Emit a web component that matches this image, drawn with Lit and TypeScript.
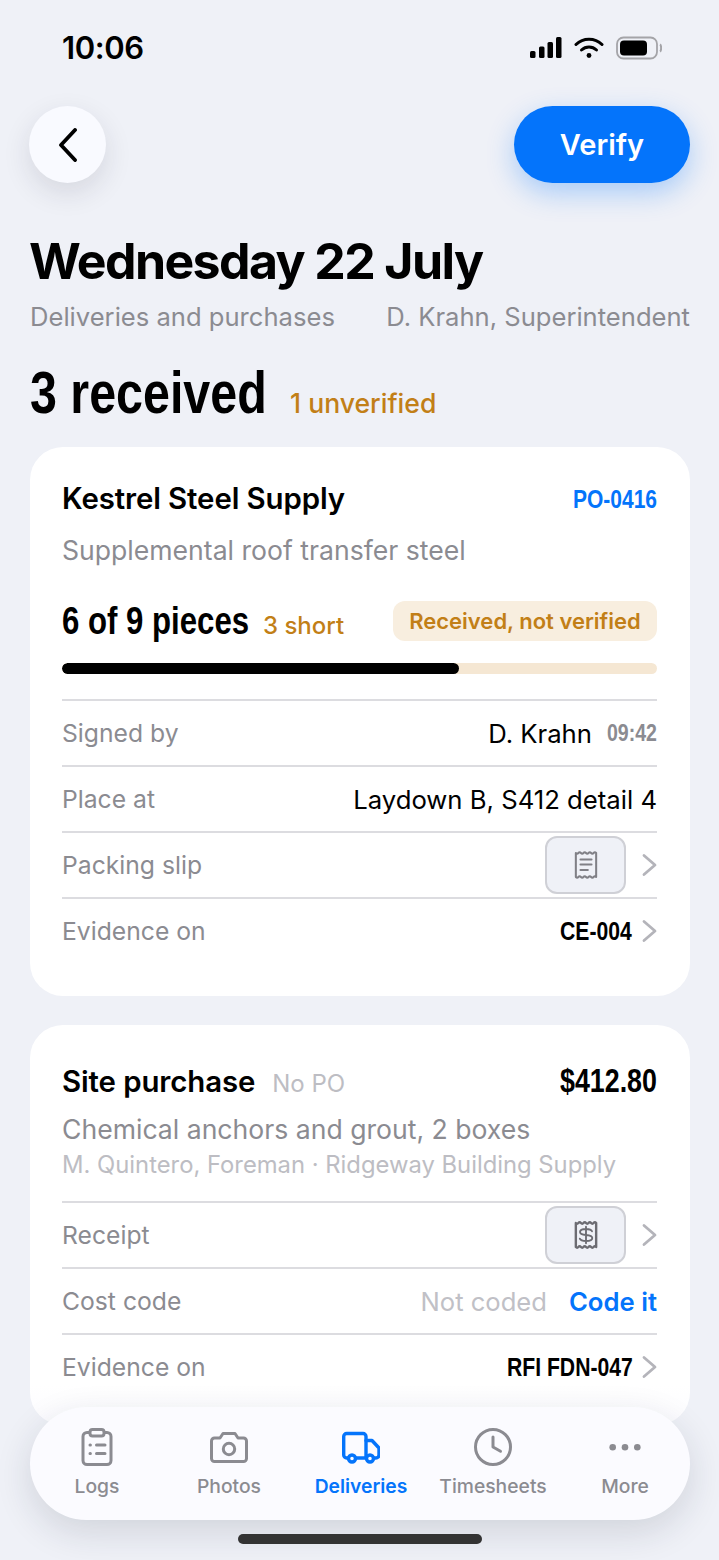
import { LitElement, html, css, svg } from "lit";
import { customElement } from "lit/decorators.js";

const chevron = html`<svg class="chev" viewBox="0 0 15 24" fill="none" stroke="currentColor" stroke-width="2.8" stroke-linecap="round" stroke-linejoin="round"><path d="M2 2.500 13 12 2 21.500"/></svg>`;

const zig = "M2 2q1.400 1.600 2.750 0t2.750 0 2.750 0 2.750 0 2.750 0 2.750 0 2.750 0 2.750 0V28q-1.400-1.600-2.750 0t-2.750 0-2.750 0-2.750 0-2.750 0-2.750 0-2.750 0-2.750 0Z";

const slipIcon = html`<svg class="slip" viewBox="0 0 26 30" fill="none" stroke="#808086" stroke-width="2.200" stroke-linejoin="round" stroke-linecap="round"><path d=${zig}/><path d="M7 9h12M7 14.500h12M7 20.500h8"/></svg>`;

const dollarIcon = html`<svg class="slip" viewBox="0 0 26 30" fill="none" stroke="#6c6c72" stroke-width="2.600" stroke-linejoin="round" stroke-linecap="round"><path d=${zig}/><path d="M19.500 11c-.6-1.700-3-2.500-6.500-2.500-3.800 0-6.500 1.200-6.500 3.300s2.700 2.900 6.500 3.200 6.800 1.100 6.800 3.200-2.900 3.300-6.800 3.300c-3.600 0-6-.8-6.700-2.600M13 6v18" stroke-width="2"/></svg>`;

const tabs = [
  { label: "Logs", icon: svg`<rect x="5" y="4.500" width="28" height="32" rx="4"/><rect x="12" y="1.500" width="14" height="6.500" rx="2.500" fill="#fbfbff"/><path d="M18.500 17h8.500M18.500 25.500h8.500"/><path d="M12 17h.4M12 25.500h.4"/>` },
  { label: "Photos", icon: svg`<path d="M4.500 33.500h29a3 3 0 0 0 3-3V13a3 3 0 0 0-3-3H28L25 5.500H13L10 10H4.500a3 3 0 0 0-3 3v17.500a3 3 0 0 0 3 3Z"/><circle cx="19" cy="21" r="5.700"/>` },
  { label: "Deliveries", active: true, sw: 3.4, icon: svg`<path d="M6.500 30H4.700a3 3 0 0 1-3-3V8.500a3 3 0 0 1 3-3H21a3 3 0 0 1 3 3V30H13.500"/><path d="M24 12.500h6l7 7.500V27a3 3 0 0 1-3 3h-2.500"/><circle cx="10" cy="30.500" r="3.500"/><circle cx="28" cy="30.500" r="3.500"/>` },
  { label: "Timesheets", icon: svg`<circle cx="19" cy="19" r="17.500"/><path d="M19 9v10l7.500 4.200"/>` },
  { label: "More", icon: svg`<circle cx="6.700" cy="19.300" r="3.300" fill="currentColor" stroke="none"/><circle cx="19" cy="19.300" r="3.300" fill="currentColor" stroke="none"/><circle cx="31.300" cy="19.300" r="3.300" fill="currentColor" stroke="none"/>` },
];

@customElement("app-root")
export class AppRoot extends LitElement {
  static styles = css`
    :host {
      display: block;
      width: 719px;
      height: 1560px;
      overflow: hidden;
      position: relative;
      background: #eff1f7;
      color: #000;
      font-family: Inter, "Liberation Sans", sans-serif;
    }
    * { box-sizing: border-box; }
    .narrow {
      display: inline-block;
      font-family: "Liberation Sans", Arial, sans-serif;
      font-weight: 700;
      white-space: nowrap;
      transform: scaleX(.82);
      transform-origin: left center;
    }
    .status { height: 106px; display: flex; justify-content: space-between; padding: 29px 57px 0 62px; }
    .time { font-size: 31px; font-weight: 600; line-height: 38px; letter-spacing: -0.4px; }
    .sysicons { display: flex; align-items: center; height: 38px; gap: 12px; margin-top: 0; }
    .sysicons svg { display: block; }
    .nav { display: flex; justify-content: space-between; padding: 0 29px; }
    .back { width: 77px; height: 77px; border-radius: 50%; background: #f9faff; display: flex; align-items: center; justify-content: center; box-shadow: 0 10px 28px rgba(30,35,60,.12); }
    .back svg { width: 22px; height: 34px; margin-left: 1px; }
    .verify { width: 176px; height: 77px; border-radius: 39px; background: #0474fb; color: #fff; font-size: 29px; font-weight: 600; display: flex; align-items: center; justify-content: center; box-shadow: 0 10px 28px rgba(4,116,251,.3); }
    h1 { margin: 49px 29px 0; font-size: 50px; line-height: 58px; font-weight: 700; letter-spacing: -1.6px; }
    .sub { margin: 10px 29px 0 30px; display: flex; justify-content: space-between; font-size: 25.600px; line-height: 34px; color: #8b8b91; }
    .summary { margin: 30px 30px 0; display: flex; align-items: baseline; gap: 23px; height: 58px; }
    .summary b { font-size: 59px; line-height: 58px; width: 237px; }
    .summary span { font-size: 26.600px; font-weight: 500; color: #c27f17; }
    .card { margin: 0 29px 29px 30px; background: #fff; border-radius: 33px; padding: 31px 33px 30px 32px; }
    .c1 { margin-top: 25px; height: 549px; }
    .c2 { height: 400px; padding-top: 36px; }
    .head { display: flex; justify-content: space-between; align-items: center; height: 40px; }
    .name { font-size: 29.400px; font-weight: 600; letter-spacing: -.1px; }
    .po { font-size: 25.600px; color: #0474fb; width: 84px; padding-top: 2px; }
    .desc { font-size: 26.600px; line-height: 34px; color: #8b8b91; margin-top: 15px; }
    .qty { display: flex; align-items: center; justify-content: space-between; margin-top: 34px; height: 40px; }
    .qty .l { display: flex; align-items: baseline; gap: 15px; }
    .qty b { font-size: 38px; width: 186px; }
    .qty .short { font-size: 24px; font-weight: 500; color: #c27f17; }
    .pill { height: 40px; width: 264px; border-radius: 12px; background: #f8eedf; color: #c27f17; font-size: 22px; font-weight: 600; display: flex; align-items: center; justify-content: center; }
    .bar { height: 11px; border-radius: 6px; background: #f5e7d3; margin-top: 22px; overflow: hidden; }
    .bar i { display: block; height: 100%; border-radius: 6px; background: #000; }
    .rows { margin-top: 25px; }
    .row { height: 66px; border-top: 2px solid #dcdce0; display: flex; align-items: center; justify-content: space-between; font-size: 24.700px; color: #8b8b91; }
    .r { display: flex; align-items: center; color: #000; font-size: 25.700px; }
    .r .t { font-size: 23.800px; color: #8b8b91; margin-left: 15px; width: 50px; }
    .ref { font-size: 25.800px; margin-right: -6px; }
    .ref.ce { width: 72px; }
    .ref.rfi { width: 125px; }
    .thumb { width: 81px; height: 58px; border-radius: 12px; background: #eff1f7; border: 2px solid #cfd0d6; display: flex; align-items: center; justify-content: center; }
    .slip { width: 24px; height: 28px; display: block; }
    .chev { width: 15px; height: 24px; color: #b4b4ba; margin-left: 16px; display: block; }
    .ph { color: #c0c0c6; font-size: 25.600px; }
    .link { color: #0474fb; font-weight: 600; margin-left: 22px; font-size: 25.700px; }
    .title2 { display: flex; align-items: baseline; gap: 17px; }
    .nopo { font-size: 24px; color: #bdbdc3; }
    .amt { font-size: 32.700px; width: 97px; }
    .c2 .desc { margin-top: 11px; line-height: 34px; }
    .meta { font-size: 23.800px; line-height: 30px; color: #bdbdc3; margin-top: 4px; }
    .c2 .rows { margin-top: 21px; }
    .tabbar { position: absolute; left: 30px; top: 1407px; width: 660px; height: 113px; border-radius: 57px; background: #fbfbff; display: grid; grid-template-columns: repeat(5, 132px); padding-left: 1px; box-shadow: 0 12px 36px rgba(30,35,60,.14); }
    .tab { display: flex; flex-direction: column; align-items: center; padding-top: 21px; color: #8b8b91; font-size: 19.300px; font-weight: 500; white-space: nowrap; }
    .tab svg { width: 38px; height: 38px; display: block; margin-bottom: 8px; }
    .tab.on { color: #0474fb; font-weight: 600; }
    .fade { position: absolute; left: 30px; width: 660px; top: 1385px; height: 40px; background: linear-gradient(rgba(255,255,255,0), rgba(251,251,255,.9)); border-radius: 0 0 33px 33px; }
    .home { position: absolute; left: 238px; top: 1534px; width: 244px; height: 10px; border-radius: 5px; background: #333; }
  `;

  render() {
    return html`
      <div class="status">
        <div class="time">10:06</div>
        <div class="sysicons">
          <svg width="32" height="22" viewBox="0 0 32 22" fill="#000"><rect x="0" y="14" width="5.500" height="7" rx="1.500"/><rect x="9" y="9.500" width="5.500" height="11.500" rx="1.500"/><rect x="17.500" y="5" width="5.500" height="16" rx="1.500"/><rect x="26" y="0" width="5.500" height="21" rx="1.500"/></svg>
          <svg width="30" height="22" viewBox="0 0 30 22" fill="none" stroke="#000" stroke-width="3" stroke-linecap="round"><path d="M2 7.500a18.500 18.500 0 0 1 26 0"/><path d="M7.500 13a11 11 0 0 1 15 0"/><circle cx="15" cy="18.500" r="2.400" fill="#000" stroke="none"/></svg>
          <svg width="46" height="24" viewBox="0 0 46 24" fill="none"><rect x="1" y="1.500" width="40" height="21" rx="6.500" stroke="#a4a4a8" stroke-width="1.800"/><rect x="4" y="4.500" width="27" height="15" rx="4" fill="#000"/><path d="M44 8.500c1.500.8 1.500 6.200 0 7" stroke="#a4a4a8" stroke-width="2"/></svg>
        </div>
      </div>
      <div class="nav">
        <div class="back"><svg viewBox="0 0 22 34" fill="none" stroke="#000" stroke-width="3.800" stroke-linecap="round" stroke-linejoin="round"><path d="M18 2 4 17l14 15"/></svg></div>
        <div class="verify">Verify</div>
      </div>
      <h1>Wednesday 22 July</h1>
      <div class="sub"><span>Deliveries and purchases</span><span>D. Krahn, Superintendent</span></div>
      <div class="summary"><b class="narrow">3 received</b><span>1 unverified</span></div>

      <section class="card c1">
        <div class="head"><div class="name">Kestrel Steel Supply</div><div class="po narrow">PO-0416</div></div>
        <div class="desc">Supplemental roof transfer steel</div>
        <div class="qty">
          <div class="l"><b class="narrow">6 of 9 pieces</b><span class="short">3 short</span></div>
          <div class="pill">Received, not verified</div>
        </div>
        <div class="bar"><i style="width:${(6 / 9) * 100}%"></i></div>
        <div class="rows">
          <div class="row"><span>Signed by</span><span class="r">D. Krahn<span class="t narrow">09:42</span></span></div>
          <div class="row"><span>Place at</span><span class="r">Laydown B, S412 detail 4</span></div>
          <div class="row"><span>Packing slip</span><span class="r"><span class="thumb">${slipIcon}</span>${chevron}</span></div>
          <div class="row"><span>Evidence on</span><span class="r"><span class="ref ce narrow">CE-004</span>${chevron}</span></div>
        </div>
      </section>

      <section class="card c2">
        <div class="head">
          <div class="title2"><span class="name">Site purchase</span><span class="nopo">No PO</span></div>
          <div class="amt narrow">$412.80</div>
        </div>
        <div class="desc">Chemical anchors and grout, 2 boxes</div>
        <div class="meta">M. Quintero, Foreman · Ridgeway Building Supply</div>
        <div class="rows">
          <div class="row"><span>Receipt</span><span class="r"><span class="thumb">${dollarIcon}</span>${chevron}</span></div>
          <div class="row"><span>Cost code</span><span class="r"><span class="ph">Not coded</span><span class="link">Code it</span></span></div>
          <div class="row"><span>Evidence on</span><span class="r"><span class="ref rfi narrow">RFI FDN-047</span>${chevron}</span></div>
        </div>
      </section>

      <div class="fade"></div>
      <nav class="tabbar">
        ${tabs.map(
          (t) => html`<div class="tab ${t.active ? "on" : ""}">
            <svg viewBox="0 0 38 38" fill="none" stroke="currentColor" stroke-width=${t.sw ?? 3} stroke-linecap="round" stroke-linejoin="round">${t.icon}</svg>
            <span>${t.label}</span>
          </div>`
        )}
      </nav>
      <div class="home"></div>
    `;
  }
}
